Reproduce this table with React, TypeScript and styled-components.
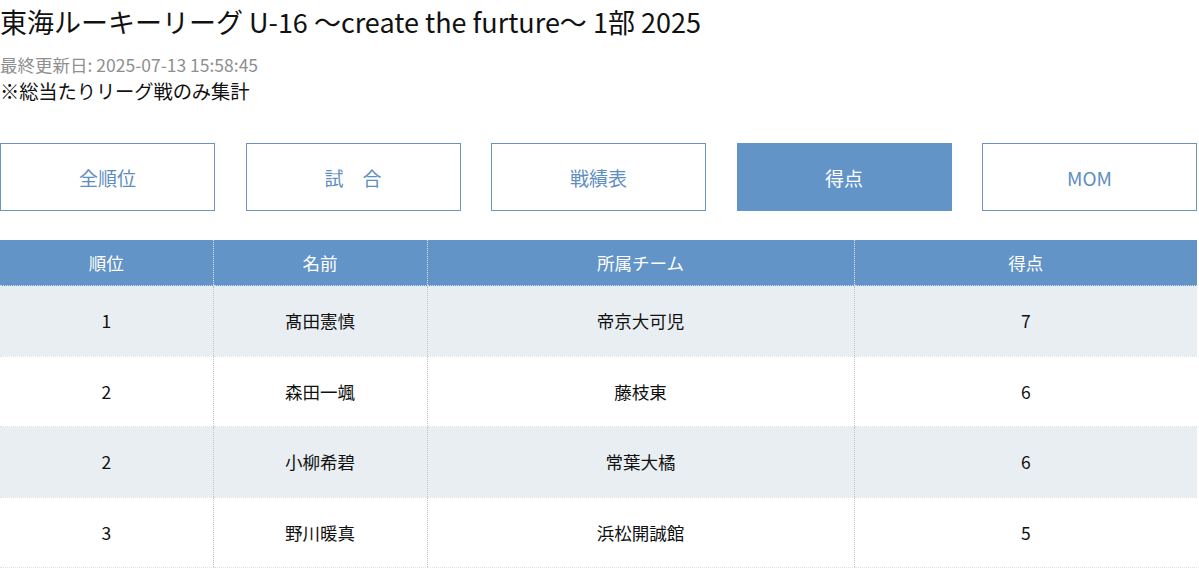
import React from "react";
import styled, { createGlobalStyle } from "styled-components";

const Global = createGlobalStyle`
  html, body { margin: 0; padding: 0; background: #fff; }
  body { font-family: "Noto Sans CJK JP", "Noto Sans", sans-serif; color: #111; }
`;

const Page = styled.div`
  width: 1199px;
`;

const Title = styled.h1`
  margin: 0;
  padding-top: 2px;
  font-size: 27px;
  font-weight: 400;
  line-height: 40px;
`;

const Updated = styled.div`
  margin-top: 10px;
  font-size: 17.5px;
  line-height: 26px;
  color: #8f8f8f;
`;

const Note = styled.div`
  font-size: 19.3px;
  line-height: 26px;
  letter-spacing: -0.1px;
`;

const Tabs = styled.nav`
  display: grid;
  grid-template-columns: repeat(5, 215px);
  column-gap: 30.5px;
  margin-top: 39px;
`;

const Tab = styled.div<{ $active?: boolean }>`
  height: 68px;
  box-sizing: border-box;
  border: 1px solid ${(p) => (p.$active ? "#6294c8" : "#6a94c0")};
  background: ${(p) => (p.$active ? "#6294c8" : "#fff")};
  color: ${(p) => (p.$active ? "#fff" : "#5d8ec2")};
  display: flex;
  align-items: center;
  justify-content: center;
  font-size: 19px;
  white-space: pre;
`;

const Table = styled.table`
  margin-top: 29px;
  width: 1197px;
  border-collapse: collapse;
  table-layout: fixed;
  font-size: 17.5px;
`;

const Th = styled.th`
  height: 45px;
  padding: 0;
  background: #6294c8;
  color: #fff;
  font-weight: 400;
  border-left: 1px dotted #dfe8f2;
  border-bottom: 1px dotted #c8d6e6;
  &:first-child { border-left: none; }
`;

const Row = styled.tr<{ $alt: boolean }>`
  background: ${(p) => (p.$alt ? "#e9eef3" : "#fff")};
`;

const Td = styled.td`
  height: 69.5px;
  padding: 0;
  text-align: center;
  border-left: 1px dotted #c4c4c4;
  border-bottom: 1px dotted #e0e0e0;
  &:first-child { border-left: none; }
`;

const tabs = ["全順位", "試　合", "戦績表", "得点", "MOM"];
const rows = [
  ["1", "髙田憲慎", "帝京大可児", "7"],
  ["2", "森田一颯", "藤枝東", "6"],
  ["2", "小柳希碧", "常葉大橘", "6"],
  ["3", "野川暖真", "浜松開誠館", "5"],
];

export default function App() {
  return (
    <Page>
      <Global />
      <Title>東海ルーキーリーグ U-16 〜create the furture〜 1部 2025</Title>
      <Updated>最終更新日: 2025-07-13 15:58:45</Updated>
      <Note>※総当たりリーグ戦のみ集計</Note>
      <Tabs>
        {tabs.map((t) => (
          <Tab key={t} $active={t === "得点"}>{t}</Tab>
        ))}
      </Tabs>
      <Table>
        <colgroup>
          <col style={{ width: 213 }} />
          <col style={{ width: 214 }} />
          <col style={{ width: 427 }} />
          <col style={{ width: 343 }} />
        </colgroup>
        <thead>
          <tr>
            <Th>順位</Th>
            <Th>名前</Th>
            <Th>所属チーム</Th>
            <Th>得点</Th>
          </tr>
        </thead>
        <tbody>
          {rows.map((r, i) => (
            <Row key={i} $alt={i % 2 === 0}>
              {r.map((c, j) => (
                <Td key={j}>{c}</Td>
              ))}
            </Row>
          ))}
        </tbody>
      </Table>
    </Page>
  );
}
